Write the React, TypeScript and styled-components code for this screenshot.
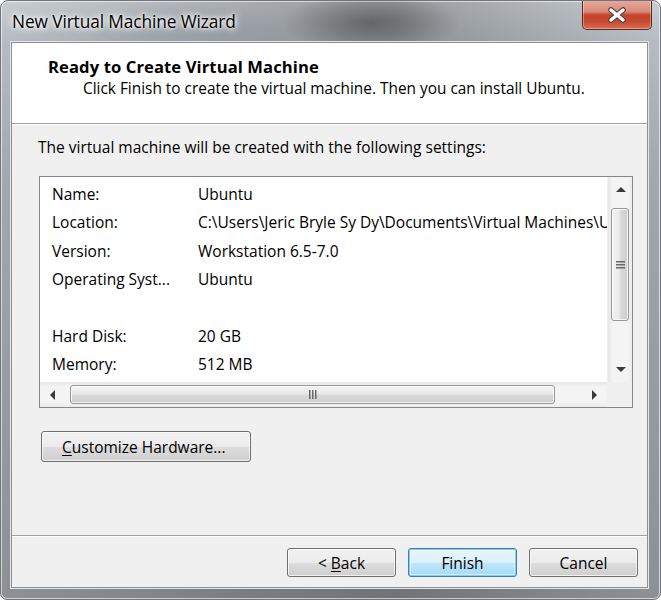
import React from "react";
import styled, { createGlobalStyle, css } from "styled-components";

const Global = createGlobalStyle`
  html, body { margin: 0; padding: 0; background: #ffffff; }
  body { font-family: "Open Sans", "Noto Sans", sans-serif; }
  * { box-sizing: border-box; }
`;

const FONT = `"Open Sans", "Noto Sans", sans-serif`;

const Window = styled.div`
  position: relative;
  width: 661px;
  height: 600px;
  display: flex;
  flex-direction: column;
  border: 1px solid #6f757b;
  border-radius: 8px 8px 7px 7px;
  background:
    linear-gradient(90deg, rgba(255,255,255,0.0) 0, rgba(60,60,60,0.25) 40%, rgba(60,60,60,0.35) 60%, rgba(255,255,255,0) 100%),
    linear-gradient(180deg, #c9ced3 0, #b6bcc2 40px, #a3a8ad 180px, #8d9195 100%);
  box-shadow: inset 0 0 0 1px rgba(255,255,255,0.6);
  padding: 0 12px 11px 10px;
  overflow: hidden;
`;

const TitleBar = styled.div`
  height: 41px;
  display: flex;
  align-items: flex-start;
  justify-content: space-between;
  background:
    radial-gradient(ellipse 90px 30px at 370px 22px, rgba(60,60,60,0.55), rgba(60,60,60,0) 100%),
    radial-gradient(ellipse 120px 25px at 180px 28px, rgba(90,110,130,0.18), rgba(60,60,60,0) 100%);
  margin: 0 -12px 0 -10px;
  padding: 0 8px 0 11px;
`;

const TitleText = styled.div`
  font-family: ${FONT};
  font-size: 17.3px;
  color: #000;
  padding-top: 9px;
  text-shadow: 0 0 6px #fff, 0 0 10px #fff, 0 0 3px #fff;
  letter-spacing: -0.1px;
`;

const CloseButton = styled.div`
  width: 70px;
  height: 30px;
  margin-top: -1px;
  border: 1px solid #5d2a20;
  border-top: none;
  border-radius: 0 0 5px 5px;
  background: linear-gradient(180deg, #e6ab9f 0, #d98a78 40%, #c3432b 52%, #c64a31 75%, #d86e52 100%);
  box-shadow: inset 0 0 0 1px rgba(255,255,255,0.35);
  display: flex;
  align-items: center;
  justify-content: center;
`;

const Client = styled.div`
  flex: 1;
  display: flex;
  flex-direction: column;
  background: #f0f0f0;
  border: 1px solid #8b9096;
  box-shadow: 0 0 0 1px #e3e6e9;
`;

const Header = styled.div`
  height: 81px;
  background: #ffffff;
  border-bottom: 1px solid #a0a0a0;
  padding: 12px 0 0 36px;
  font-family: ${FONT};
  box-shadow: 0 1px 0 #ffffff;
`;

const HeaderTitle = styled.div`
  font-weight: 700;
  font-size: 16.6px;
  line-height: 23px;
  color: #000;
  letter-spacing: 0.1px;
`;

const HeaderSub = styled.div`
  font-size: 15.4px;
  line-height: 22px;
  color: #000;
  padding-left: 35px;
`;

const Body = styled.div`
  flex: 1;
  display: flex;
  flex-direction: column;
  padding: 13px 14px 0 26px;
  font-family: ${FONT};
  font-size: 15.5px;
  color: #000;
`;

const Intro = styled.div`
  line-height: 20px;
`;

const ListBox = styled.div`
  margin: 19px 0 0 1px;
  height: 232px;
  border: 1px solid #828790;
  background: #fff;
  display: grid;
  grid-template-columns: minmax(0, 1fr) 25px;
  grid-template-rows: 1fr 25px;
`;

const Rows = styled.div`
  overflow: hidden;
  padding: 3px 0 0 12px;
  white-space: nowrap;
`;

const Row = styled.div`
  display: flex;
  height: 28.3px;
  align-items: center;
`;

const Label = styled.span`
  width: 146px;
  flex: none;
`;

const Value = styled.span``;

const VScroll = styled.div`
  display: flex;
  flex-direction: column;
  background: linear-gradient(90deg, #e6e6e6 0, #f4f4f4 20%, #f4f4f4 80%, #ececec 100%);
  border-left: 1px solid #f0f0f0;
`;

const HScroll = styled.div`
  display: flex;
  background: linear-gradient(180deg, #e6e6e6 0, #f4f4f4 20%, #f4f4f4 80%, #ececec 100%);
`;

const Corner = styled.div`
  background: #f0f0f0;
`;

const ArrowBox = styled.div`
  width: 25px;
  height: 25px;
  flex: none;
  display: flex;
  align-items: center;
  justify-content: center;
`;

const Track = styled.div<{ $vertical?: boolean }>`
  flex: 1;
  display: flex;
  ${(p) =>
    p.$vertical
      ? css`flex-direction: column; padding: 6px 3px 0 3px;`
      : css`padding: 3px 0 3px 5px;`}
`;

const Thumb = styled.div<{ $vertical?: boolean }>`
  border: 1px solid #979797;
  border-radius: 3px;
  display: flex;
  align-items: center;
  justify-content: center;
  box-shadow: inset 0 0 0 1px rgba(255,255,255,0.8);
  ${(p) =>
    p.$vertical
      ? css`
          height: 113px;
          background: linear-gradient(90deg, #f3f3f3 0, #e9e9e9 45%, #d9d9d9 55%, #cdcdcd 100%);
        `
      : css`
          width: 485px;
          background: linear-gradient(180deg, #f3f3f3 0, #e9e9e9 45%, #d9d9d9 55%, #cdcdcd 100%);
        `}
`;

const BtnBase = styled.button<{ $default?: boolean }>`
  font-family: ${FONT};
  font-size: 15.5px;
  color: #000;
  height: 31px;
  border-radius: 3px;
  border: 1px solid #707070;
  padding: 0;
  background: linear-gradient(180deg, #f2f2f2 0, #ebebeb 50%, #dddddd 51%, #cfcfcf 100%);
  box-shadow: inset 0 0 0 1px rgba(255,255,255,0.7);
  display: flex;
  align-items: center;
  justify-content: center;
  ${(p) =>
    p.$default &&
    css`
      border-color: #3c7fb1;
      background: linear-gradient(180deg, #eaf6fd 0, #d9f0fc 50%, #bee6fd 51%, #a7d9f5 100%);
      box-shadow: inset 0 0 0 1px #7fcdf4, inset 0 0 0 2px rgba(255,255,255,0.5);
    `}
`;

const CustomizeButton = styled(BtnBase)`
  margin: 23px 0 0 3px;
  width: 210px;
  justify-content: flex-start;
  padding-left: 20px;
`;

const Footer = styled.div`
  height: 52px;
  border-top: 1px solid #a0a0a0;
  box-shadow: inset 0 1px 0 #ffffff;
  display: flex;
  justify-content: flex-end;
  align-items: flex-start;
  gap: 12px;
  padding: 12px 9px 0 0;
`;

const FooterButton = styled(BtnBase)`
  width: 109px;
  height: 29px;
`;

const U = styled.span`
  text-decoration: underline;
  text-underline-offset: 2px;
`;

const Tri = ({ dir }: { dir: "up" | "down" | "left" | "right" }) => {
  const pts = {
    up: "0,5 5,0 10,5",
    down: "0,0 10,0 5,5",
    left: "5,0 5,10 0,5",
    right: "0,0 0,10 5,5",
  }[dir];
  const w = dir === "up" || dir === "down" ? 10 : 5;
  const h = dir === "up" || dir === "down" ? 5 : 10;
  return (
    <svg width={w} height={h} viewBox={`0 0 ${w} ${h}`}>
      <polygon points={pts} fill="#3a3a3a" />
    </svg>
  );
};

const GripV = () => (
  <svg width="9" height="8" viewBox="0 0 9 8">
    {[0, 3, 6].map((y) => (
      <rect key={y} x="0" y={y} width="9" height="1.5" fill="#6a6a6a" />
    ))}
  </svg>
);

const GripH = () => (
  <svg width="8" height="9" viewBox="0 0 8 9">
    {[0, 3, 6].map((x) => (
      <rect key={x} x={x} y="0" width="1.5" height="9" fill="#6a6a6a" />
    ))}
  </svg>
);

const CloseX = () => (
  <svg width="22" height="16" viewBox="0 0 22 16">
    <path d="M5 3 L17 13 M17 3 L5 13" stroke="#4a3b38" strokeWidth="5.5" strokeLinecap="round" />
    <path d="M5 3 L17 13 M17 3 L5 13" stroke="#ffffff" strokeWidth="3.5" strokeLinecap="round" />
  </svg>
);

const rows: [string, string][] = [
  ["Name:", "Ubuntu"],
  ["Location:", "C:\\Users\\Jeric Bryle Sy Dy\\Documents\\Virtual Machines\\Ubuntu"],
  ["Version:", "Workstation 6.5-7.0"],
  ["Operating Syst...", "Ubuntu"],
  ["", ""],
  ["Hard Disk:", "20 GB"],
  ["Memory:", "512 MB"],
];

export default function App() {
  return (
    <>
      <Global />
      <Window>
        <TitleBar>
          <TitleText>New Virtual Machine Wizard</TitleText>
          <CloseButton>
            <CloseX />
          </CloseButton>
        </TitleBar>
        <Client>
          <Header>
            <HeaderTitle>Ready to Create Virtual Machine</HeaderTitle>
            <HeaderSub>Click Finish to create the virtual machine. Then you can install Ubuntu.</HeaderSub>
          </Header>
          <Body>
            <Intro>The virtual machine will be created with the following settings:</Intro>
            <ListBox>
              <Rows>
                {rows.map(([l, v], i) => (
                  <Row key={i}>
                    <Label>{l}</Label>
                    <Value>{v}</Value>
                  </Row>
                ))}
              </Rows>
              <VScroll>
                <ArrowBox><Tri dir="up" /></ArrowBox>
                <Track $vertical>
                  <Thumb $vertical><GripV /></Thumb>
                </Track>
                <ArrowBox><Tri dir="down" /></ArrowBox>
              </VScroll>
              <HScroll>
                <ArrowBox><Tri dir="left" /></ArrowBox>
                <Track>
                  <Thumb><GripH /></Thumb>
                </Track>
                <ArrowBox><Tri dir="right" /></ArrowBox>
              </HScroll>
              <Corner />
            </ListBox>
            <CustomizeButton>
              <span><U>C</U>ustomize Hardware...</span>
            </CustomizeButton>
          </Body>
          <Footer>
            <FooterButton><span>&lt; <U>B</U>ack</span></FooterButton>
            <FooterButton $default>Finish</FooterButton>
            <FooterButton>Cancel</FooterButton>
          </Footer>
        </Client>
      </Window>
    </>
  );
}
